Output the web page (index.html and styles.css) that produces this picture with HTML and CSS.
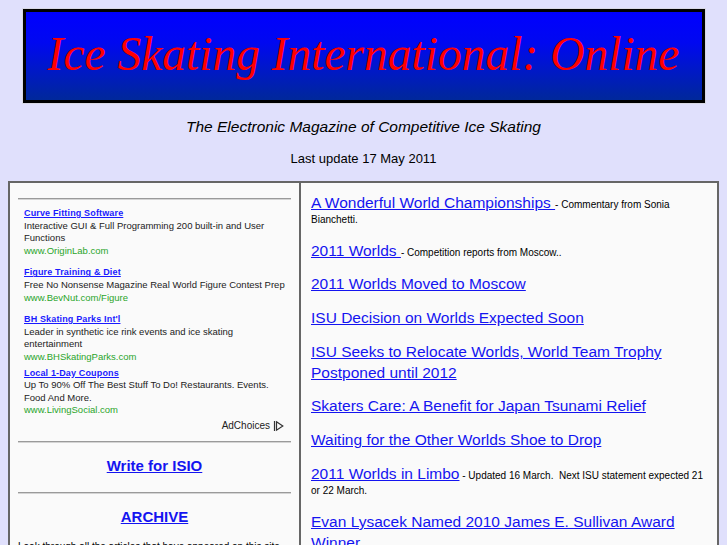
FILE: index.html
```html
<!DOCTYPE html>
<html>
<head>
<meta charset="utf-8">
<title>Ice Skating International: Online</title>
<link rel="stylesheet" href="styles.css">
</head>
<body>
<div class="banner">
  <div class="banner-inner">Ice Skating International: Online</div>
</div>
<div class="tagline">The Electronic Magazine of Competitive Ice Skating</div>
<div class="updated">Last update 17 May 2011</div>

<div class="main">
  <div class="side">
    <div class="rule"></div>
    <div class="ads">
      <div class="ad">
        <a class="ad-title" href="#">Curve Fitting Software</a>
        <div class="ad-text">Interactive GUI &amp; Full Programming 200 built-in and User Functions</div>
        <div class="ad-url">www.OriginLab.com</div>
      </div>
      <div class="ad">
        <a class="ad-title" href="#">Figure Training &amp; Diet</a>
        <div class="ad-text">Free No Nonsense Magazine Real World Figure Contest Prep</div>
        <div class="ad-url">www.BevNut.com/Figure</div>
      </div>
      <div class="ad ad-tight">
        <a class="ad-title" href="#">BH Skating Parks Int'l</a>
        <div class="ad-text">Leader in synthetic ice rink events and ice skating entertainment</div>
        <div class="ad-url">www.BHSkatingParks.com</div>
      </div>
      <div class="ad ad-last">
        <a class="ad-title" href="#">Local 1-Day Coupons</a>
        <div class="ad-text">Up To 90% Off The Best Stuff To Do! Restaurants. Events. Food And More.</div>
        <div class="ad-url">www.LivingSocial.com</div>
      </div>
      <div class="adchoices">AdChoices <svg class="adchoices-icon" width="11" height="12" viewBox="0 0 11 12"><path d="M1.5 1 V11" stroke="#333" stroke-width="1.2" fill="none"/><path d="M3.5 1.8 L9.8 6 L3.5 10.2 Z" stroke="#333" stroke-width="1.2" fill="none" stroke-linejoin="miter"/></svg></div>
    </div>
    <div class="rule"></div>
    <div class="feature"><a href="#">Write for ISIO</a></div>
    <div class="rule"></div>
    <div class="feature feature-archive"><a href="#">ARCHIVE</a></div>
    <p class="side-text">Look through all the articles that have appeared on this site since 1996.</p>
  </div>
  <div class="news">
    <p><a href="#">A Wonderful World Championships </a>- Commentary from Sonia Bianchetti.</p>
    <p><a href="#">2011 Worlds </a>- Competition reports from Moscow..</p>
    <p><a href="#">2011 Worlds Moved to Moscow</a></p>
    <p><a href="#">ISU Decision on Worlds Expected Soon</a></p>
    <p><a href="#">ISU Seeks to Relocate Worlds, World Team Trophy Postponed until 2012</a></p>
    <p><a href="#">Skaters Care: A Benefit for Japan Tsunami Relief</a></p>
    <p><a href="#">Waiting for the Other Worlds Shoe to Drop</a></p>
    <p><a href="#">2011 Worlds in Limbo</a> - Updated 16 March.&nbsp; Next ISU statement expected 21 or 22 March.</p>
    <p><a href="#">Evan Lysacek Named 2010 James E. Sullivan Award Winner</a></p>
    <p><a href="#">Skate America Moves to Ontario, California</a></p>
  </div>
</div>
</body>
</html>
```

FILE: styles.css
```css
html, body {
  background: #e0e0fc;
}
body {
  margin: 8px;
  font-family: "Liberation Sans", Arial, sans-serif;
  color: #000;
}
a {
  color: #1414f0;
  text-decoration: underline;
}

.banner {
  width: 684px;
  margin: 0 auto 14px;
  border: 1px solid #d8d8e4;
  box-sizing: border-box;
}
.banner-inner {
  height: 94px;
  box-sizing: border-box;
  border: 3px solid #000;
  background: linear-gradient(to bottom, #0000ff 0%, #0008f0 35%, #0018c8 65%, #00289a 100%);
  color: #ff0000;
  font-family: "Liberation Serif", "Times New Roman", serif;
  font-style: italic;
  font-size: 47.5px;
  line-height: 1;
  text-align: center;
  padding-top: 19px;
  white-space: nowrap;
}

.tagline {
  text-align: center;
  font-style: italic;
  font-size: 15.5px;
  line-height: 18px;
  margin-bottom: 15px;
}
.updated {
  text-align: center;
  font-size: 13px;
  line-height: 16px;
  margin-bottom: 14px;
}

.main {
  display: grid;
  grid-template-columns: 291px 1fr;
  border: 2px solid #666;
  background: #fafafa;
}
.side {
  border-right: 2px solid #666;
  padding: 15px 8px 8px;
}
.rule {
  border-top: 1px solid #9a9a9a;
  border-bottom: 1px solid #d4d4d4;
}
.ads {
  padding: 7px 7px 9px 6px;
  font-size: 9.5px;
  line-height: 12.6px;
}
.ad {
  margin-bottom: 9px;
  margin-right: -7px;
}
.ad-tight {
  margin-bottom: 3px;
}
.ad-last {
  margin-bottom: 3px;
}
.ad-title {
  font-weight: bold;
  font-size: 9px;
  letter-spacing: 0.15px;
  color: #1a1aff;
}
.ad-text {
  color: #222;
}
.ad-url {
  color: #2aa52a;
}
.adchoices {
  display: flex;
  justify-content: flex-end;
  align-items: center;
  gap: 3px;
  font-size: 10px;
  line-height: 12px;
  color: #222;
}
.adchoices-icon {
  display: block;
}
.feature {
  text-align: center;
  font-weight: bold;
  font-size: 15px;
  line-height: 18px;
  padding: 14px 0 17px;
}
.feature-archive {
  padding-bottom: 14px;
}
.side-text {
  margin: 0;
  font-size: 10px;
  line-height: 13px;
}

.news {
  padding: 8.5px 10px 10px;
}
.news p {
  margin: 0 0 12.7px;
  font-size: 10px;
  line-height: 14.5px;
}
.news a {
  font-size: 15.5px;
  line-height: 21px;
}
```
